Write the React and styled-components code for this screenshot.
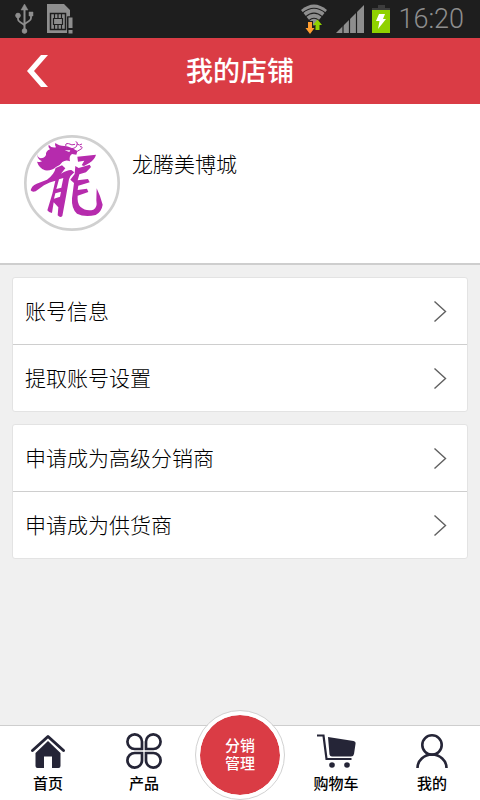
import React from "react";
import styled, { createGlobalStyle } from "styled-components";

const GlobalStyle = createGlobalStyle`
  * { box-sizing: border-box; }
  body {
    margin: 0;
    background: #f0f0f0;
    color: #000;
    font-family: Roboto, "Noto Sans CJK SC", sans-serif;
  }
`;

const Screen = styled.div`
  display: flex;
  flex-direction: column;
  min-height: 100vh;
`;

const StatusBar = styled.div`
  display: flex;
  align-items: center;
  justify-content: space-between;
  height: 38px;
  padding: 0 16px 0 14px;
  background: #1e1e1e;
`;

const StatusGroup = styled.div`
  display: flex;
  align-items: center;
  gap: ${(p) => p.$gap}px;
`;

const Clock = styled.time`
  font: 300 27px/38px Roboto, sans-serif;
  color: #8e8e8e;
`;

const Header = styled.header`
  display: grid;
  grid-template-columns: 76px 1fr 76px;
  align-items: center;
  height: 66px;
  background: #da3c45;
  color: #fff;
`;

const BackButton = styled.button`
  display: flex;
  align-items: center;
  justify-content: center;
  height: 66px;
  border: 0;
  padding: 0;
  background: none;
  color: inherit;
`;

const Title = styled.h1`
  margin: 0;
  padding-top: 2px;
  text-align: center;
  font-size: 27px;
  line-height: 40px;
  font-weight: 500;
`;

const Profile = styled.section`
  display: flex;
  gap: 12px;
  padding: 31px 24px 32px;
  border-bottom: 2px solid #cecece;
  background: #fff;
`;

const ShopName = styled.h2`
  margin: 14px 0 0;
  font-size: 21px;
  line-height: 32px;
  font-weight: 300;
`;

const Main = styled.main`
  flex: 1;
`;

const Menus = styled.div`
  display: flex;
  flex-direction: column;
  gap: 12px;
  padding: 12px;
`;

const Card = styled.nav`
  border: 1px solid #e3e3e3;
  border-radius: 3px;
  background: #fff;
`;

const Row = styled.a`
  display: flex;
  align-items: center;
  justify-content: space-between;
  height: 66px;
  padding: 0 20px 0 12px;
  color: #000;
  text-decoration: none;
  font-size: 21px;
  font-weight: 300;

  & + & {
    height: 67px;
    border-top: 1px solid #cecece;
  }
`;

const RowLabel = styled.span`
  padding-bottom: 3px;
`;

const TabBar = styled.nav`
  display: grid;
  grid-template-columns: repeat(5, 1fr);
  height: 75px;
  border-top: 1px solid #cecece;
  background: #fff;
`;

const Tab = styled.a`
  display: flex;
  flex-direction: column;
  align-items: center;
  gap: 4px;
  padding-top: 7px;
  color: #000;
  text-decoration: none;
  font-size: 15px;
  line-height: 22px;
  font-weight: 500;
`;

const CenterTab = styled.a`
  justify-self: center;
  display: flex;
  align-items: center;
  justify-content: center;
  width: 90px;
  height: 90px;
  margin-top: -16px;
  border: 1px solid #d2d2d2;
  border-radius: 50%;
  padding: 4px;
  background: #da3c45 content-box;
  box-shadow: inset 0 0 0 4px #fff;
  color: #fff;
  text-align: center;
  text-decoration: none;
  font-size: 15px;
  line-height: 18px;
  font-weight: 500;

  span { width: 30px; }
`;

const INK = "#252537";

const UsbIcon = () => (
  <svg width="22" height="32" viewBox="0 0 22 32" fill="#8e8e8e" stroke="#8e8e8e">
    <path d="M10.500 4v24" strokeWidth="2" />
    <path d="M10.500 1l3.500 6h-7zM15 9h4v4h-4z" strokeWidth="0.500" />
    <path d="M4 12v4q0 2 2 3l4.500 3M17 12v3q0 2-2 3l-4.500 3" fill="none" strokeWidth="1.800" />
    <circle cx="4" cy="12.500" r="2.300" />
    <circle cx="10.500" cy="28" r="2.300" />
  </svg>
);

const SimIcon = () => (
  <svg width="26" height="30" viewBox="0 0 26 30">
    <path d="M0 0h17l6 6v6.500h-3V29H0z" fill="#8e8e8e" />
    <path d="M3.500 9.500h15v16h-15z" fill="none" stroke="#1e1e1e" strokeWidth="1.500" />
    <path d="M7.500 9.500v5M11 9.500v5M14.500 9.500v5M7.500 20.500v5M11 20.500v5M14.500 20.500v5M6.500 14.500h9v6h-9z" fill="none" stroke="#1e1e1e" strokeWidth="1.200" />
    <path d="M20.500 12.500h5.500V30h-5.500z" fill="#1e1e1e" />
    <path d="M21.500 13.500h4V24h-4zM21.500 26h4v3.500h-4z" fill="#8e8e8e" />
  </svg>
);

const WifiIcon = () => (
  <svg width="28" height="30" viewBox="0 0 28 30">
    <path d="M1 6Q14-5 27 6L14 22z" fill="#8e8e8e" />
    <path d="M2.500 9Q14-.5 25.500 9M5.500 12.800Q14 5.500 22.500 12.800M9 16.500Q14 12 19 16.500" fill="none" stroke="#1e1e1e" strokeWidth="1.100" />
    <path d="M7 17h6v7h3L10.500 31 5 24h2z" fill="#1e1e1e" />
    <path d="M8 18h4v6h2.500L10 30 5.500 24H8z" fill="#ff9d30" />
    <path d="M15.500 26v-5H13l4.500-5.500L22 21h-2.500v5z" fill="#8fd100" />
  </svg>
);

const SignalIcon = () => (
  <svg width="28" height="28" viewBox="0 0 28 28">
    <path d="M0 28L28 0v28z" fill="#8e8e8e" />
    <path d="M7 18v10M13.500 12v16M20.500 5v23" stroke="#1e1e1e" strokeWidth="1.200" />
  </svg>
);

const BatteryIcon = () => (
  <svg width="18" height="28" viewBox="0 0 18 28">
    <path d="M6 0h7v3h5v2H0V3h6z" fill="#3d3d3d" />
    <path d="M0 5h18v23H0z" fill="#8fd100" />
    <path d="M7 9h6l-2 5h3L6 24l1.500-8H4z" fill="#fff" />
  </svg>
);

const BackIcon = () => (
  <svg width="22" height="32" viewBox="0 0 22 32">
    <path d="M14 0h7L7 16l14 16h-7L0 16z" fill="#fff" />
  </svg>
);

const Chevron = () => (
  <svg width="13" height="21" viewBox="0 0 13 21" aria-hidden="true">
    <path d="M.5 .5l11 10-11 10" fill="none" stroke="#606060" strokeWidth="1.400" />
  </svg>
);

const DragonAvatar = () => (
  <svg width="96" height="96" viewBox="42 45 288 288" role="img" aria-label="龙腾美博城">
    <circle cx="186" cy="189" r="140" fill="#fff" stroke="#d0d0d0" strokeWidth="8" />
    <g fill="#b62bad">
      <path d="M81 96Q79 111 92 115Q103 115 108 105Q106 94 120 88Q113 82 116 74Q124 85 138 82Q133 75 136 69Q147 78 163 78Q184 80 202 94L199 104 186 102Q176 108 180 124Q168 118 157 126Q150 137 138 141Q126 153 105 151Q87 144 81 125Q90 128 96 124Q79 116 81 96zM164 91l14 5 3-5z" fillRule="evenodd" />
      <path d="M62 211Q64 198 80 191L111 179Q133 163 137 144L156 136 166 145 153 161Q173 149 184 150L193 157Q181 166 177 178L168 229 157 288Q151 295 143 286L145 262 131 247 126 279Q117 279 112 271L127 221 136 182Q119 185 102 196L77 214Q66 217 62 211zM147 178L139 207 154 203 160 174zM136 220L132 236 150 230 153 215z" fillRule="evenodd" />
      <path d="M202 110L258 104Q254 119 238 129L222 138 215 136 223 122 204 125z" />
      <path d="M196 138L206 144 239 134 243 141 228 157 208 163 203 181 234 177 239 187 205 197 203 210 231 206 235 216 203 227Q201 250 211 260Q228 275 250 269Q263 264 259 241L260 205Q272 230 278 254Q275 275 257 285Q223 292 201 281Q184 267 186 235L192 189 181 179 194 162z" />
    </g>
    <g fill="none" stroke="#b62bad" strokeWidth="3">
      <path d="M168 79q-4-10 8-8 10 6 19 2M185 86q16-2 16-13 4-6-4-8M201 72q7 6 15 0M187 94q17 3 28-8 4-7-5-6" />
    </g>
  </svg>
);

const HomeIcon = () => (
  <svg width="36" height="36" viewBox="0 0 36 36">
    <path d="M2.500 17.500L18 3.500l15.500 14" fill="none" stroke={INK} strokeWidth="3" strokeLinecap="round" strokeLinejoin="round" />
    <path d="M18 8L5.500 20v13q0 2 2 2H14V23.500h8V35h6.500q2 0 2-2V20z" fill={INK} />
  </svg>
);

const ProductsIcon = () => (
  <svg width="38" height="36" viewBox="0 0 38 36" fill="none" stroke={INK} strokeWidth="2.700">
    <path d="M17 16h-7A7.300 7.300 0 1 1 17 9zM21 16h7A7.300 7.300 0 1 0 21 9zM17 20h-7a7.300 7.300 0 1 0 7 7zM21 20h7a7.300 7.300 0 1 1-7 7z" />
  </svg>
);

const CartIcon = () => (
  <svg width="40" height="36" viewBox="0 0 40 36">
    <path d="M1 2.500h6.500l3 23.500h25" fill="none" stroke={INK} strokeWidth="2.200" />
    <path d="M12 4l25.500 4q2.500.5 2 3L38 21q-.5 2.500-3 2.500H16q-2 0-2.500-2z" fill={INK} />
    <circle cx="16" cy="32" r="2.800" fill={INK} />
    <circle cx="31" cy="32" r="2.800" fill={INK} />
  </svg>
);

const UserIcon = () => (
  <svg width="34" height="36" viewBox="0 0 34 36" fill="none" stroke={INK} strokeWidth="2.600">
    <circle cx="17" cy="12" r="9.700" />
    <path d="M2.500 35A14.500 13.500 0 0 1 31.500 35" />
  </svg>
);

const MENU_GROUPS = [
  ["账号信息", "提取账号设置"],
  ["申请成为高级分销商", "申请成为供货商"],
];

export default function App() {
  return (
    <Screen lang="zh-CN">
      <GlobalStyle />
      <StatusBar>
        <StatusGroup $gap={11}>
          <UsbIcon />
          <SimIcon />
        </StatusGroup>
        <StatusGroup $gap={8}>
          <WifiIcon />
          <SignalIcon />
          <BatteryIcon />
          <Clock>16:20</Clock>
        </StatusGroup>
      </StatusBar>
      <Header>
        <BackButton type="button" aria-label="返回">
          <BackIcon />
        </BackButton>
        <Title>我的店铺</Title>
      </Header>
      <Main>
        <Profile>
          <DragonAvatar />
          <ShopName>龙腾美博城</ShopName>
        </Profile>
        <Menus>
          {MENU_GROUPS.map((items) => (
            <Card key={items[0]}>
              {items.map((label) => (
                <Row key={label} href="#">
                  <RowLabel>{label}</RowLabel>
                  <Chevron />
                </Row>
              ))}
            </Card>
          ))}
        </Menus>
      </Main>
      <TabBar>
        <Tab href="#"><HomeIcon />首页</Tab>
        <Tab href="#"><ProductsIcon />产品</Tab>
        <CenterTab href="#"><span>分销管理</span></CenterTab>
        <Tab href="#"><CartIcon />购物车</Tab>
        <Tab href="#"><UserIcon />我的</Tab>
      </TabBar>
    </Screen>
  );
}
